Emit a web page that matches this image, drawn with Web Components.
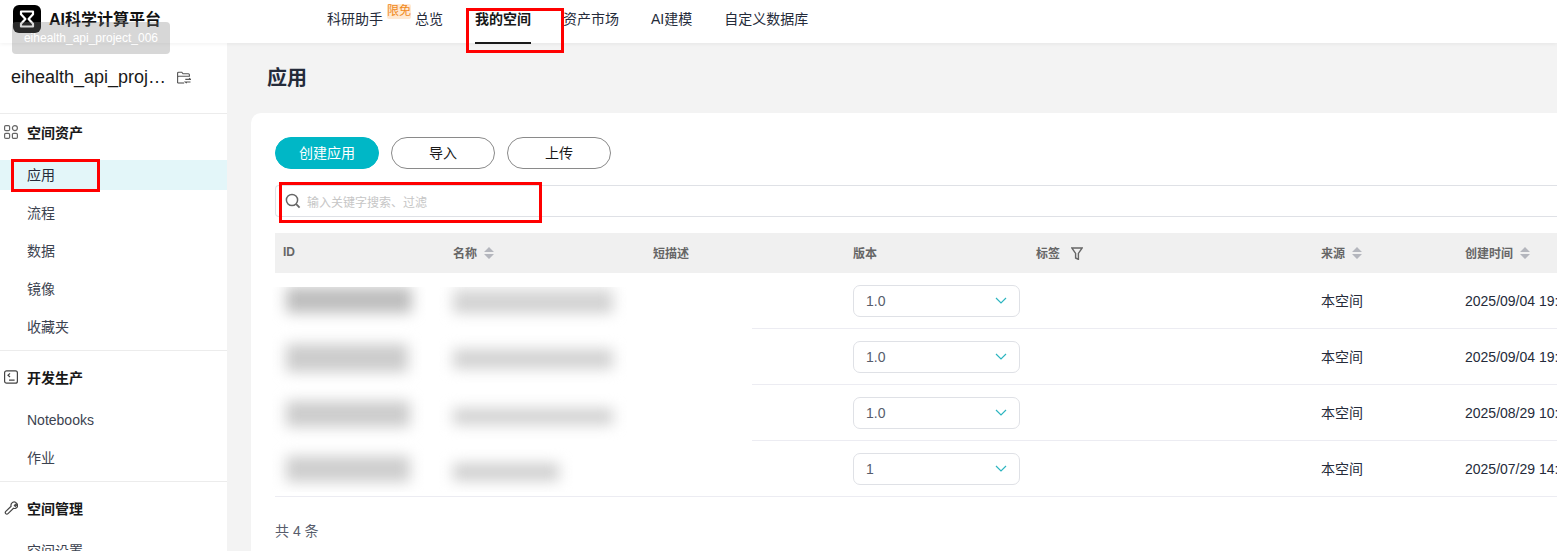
<!DOCTYPE html>
<html lang="zh">
<head>
<meta charset="utf-8">
<title>AI科学计算平台</title>
<style>
html, body { margin: 0; height: 551px; overflow: hidden; }
body { font: 14px "Liberation Sans", "Noto Sans CJK SC", sans-serif; color: #252b3a; background: #f3f3f3; }
</style>
</head>
<body>
<app-shell></app-shell>

<template id="top-bar-tpl">
  <style>
    :host { display: flex; height: 43px; background: #fff; box-shadow: 0 1px 4px rgba(0,0,0,.06); position: relative; z-index: 2; }
    .brand { display: flex; align-items: flex-start; gap: 8px; width: 327px; padding: 5px 0 0 13px; box-sizing: border-box; font-size: 16px; font-weight: 700; color: #111; }
    .brand span { line-height: 29px; }
    nav { display: flex; gap: 32px; }
    a { line-height: 39px; color: #252b3a; display: block; height: 44px; box-sizing: border-box; white-space: nowrap; }
    a.on { font-weight: 700; color: #191919; border-bottom: 2px solid #191919; }
    .with-badge { display: flex; gap: 4px; margin-right: -28px; }
    .badge { height: 15px; line-height: 15px; margin-top: 4px; font-size: 12px; color: #f08a1d; background: #ffe9d2; border-radius: 2px; }
    .tip { position: absolute; left: 12px; top: 22px; width: 158px; height: 32px; line-height: 32px; text-align: center; font-size: 12px; color: #fff; background: rgba(130,130,130,.32); border-radius: 4px; }
  </style>
  <div class="brand">
    <svg width="28" height="28" viewBox="0 0 28 28"><rect width="28" height="28" rx="6" fill="#000"/><path d="M8 6.5h12v2.7L15.6 14l4.4 4.8v2.7H8v-2.7l4.4-4.8L8 9.2z" fill="none" stroke="#fff" stroke-width="2.2" stroke-linejoin="round"/></svg>
    <span>AI科学计算平台</span>
  </div>
  <nav>
    <div class="with-badge"><a>科研助手</a><div class="badge">限免</div></div>
    <a>总览</a>
    <a class="on">我的空间</a>
    <a>资产市场</a>
    <a>AI建模</a>
    <a>自定义数据库</a>
  </nav>
  <div class="tip">eihealth_api_project_006</div>
</template>

<template id="side-section-tpl">
  <style>
    :host { display: block; border-top: 1px solid #ececec; padding-top: 13px; }
    :host([first]) { padding-top: 5px; }
    .head { display: flex; align-items: center; height: 28px; padding-bottom: 2px; box-sizing: border-box; margin-bottom: 13px; font-weight: 700; color: #191919; }
    .icon { width: 27px; padding-left: 4px; box-sizing: border-box; display: flex; }
  </style>
  <div class="head"><div class="icon"><slot name="icon"></slot></div><slot name="title"></slot></div>
  <slot></slot>
</template>

<template id="side-item-tpl">
  <style>
    :host { display: block; height: 30px; line-height: 30px; padding-left: 27px; margin-bottom: 8px; color: #3c4350; }
    :host([active]) { background: #e3f6f9; color: #252b3a; }
  </style>
  <slot></slot>
</template>

<template id="side-bar-tpl">
  <style>
    :host { display: block; width: 227px; flex: none; background: #fff; overflow: hidden; }
    .project { display: flex; align-items: center; height: 70px; padding: 0 0 2px 11px; box-sizing: border-box; font-size: 18px; color: #191919; gap: 11px; }
    .project svg { margin-top: 2px; }
  </style>
  <div class="project">
    <span>eihealth_api_proj…</span>
    <svg width="14" height="14" viewBox="0 0 14 14" fill="none" stroke="#555" stroke-width="1.1"><path d="M.6 12V2.2c0-.6.4-1 1-1h3.2l1.2 1.6h5.4c.6 0 1 .4 1 1v1.4H1.6c-.6 0-1 .4-1 1"/><path d="M.6 12h6.6"/><path d="M8.3 8.4h5.2l-1.4-1.2M13.5 11H8.3l1.4 1.2"/></svg>
  </div>
  <side-section first>
    <svg slot="icon" width="14" height="14" viewBox="0 0 14 14" fill="none" stroke="#666" stroke-width="1.2"><rect x=".6" y=".6" width="5" height="5" rx="1.2"/><rect x="8.4" y=".6" width="5" height="5" rx="2.5"/><rect x=".6" y="8.4" width="5" height="5" rx="1.2"/><rect x="8.4" y="8.4" width="5" height="5" rx="1.2"/></svg>
    <span slot="title">空间资产</span>
    <side-item active>应用</side-item>
    <side-item>流程</side-item>
    <side-item>数据</side-item>
    <side-item>镜像</side-item>
    <side-item>收藏夹</side-item>
  </side-section>
  <side-section>
    <svg slot="icon" width="14" height="14" viewBox="0 0 14 14" fill="none" stroke="#444" stroke-width="1.2"><rect x=".6" y=".8" width="12.8" height="12.4" rx="2"/><path d="M6 3.4 4 5.2 6 7M5 10.2h5.6"/></svg>
    <span slot="title">开发生产</span>
    <side-item>Notebooks</side-item>
    <side-item>作业</side-item>
  </side-section>
  <side-section>
    <svg slot="icon" width="14" height="14" viewBox="0 0 14 14" fill="none" stroke="#444" stroke-width="1.2"><path d="M8.8 1.2c1.4-.6 3 0 3.8 1.1L10.4 4.4l.9.9 2.1-1.9c.5 1.5 0 3-1.2 3.7-.9.5-1.9.5-2.7.2L4 12.6c-.7.7-1.7.6-2.3 0-.6-.7-.5-1.6.1-2.2l5.3-5.1c-.4-1.6.3-3.3 1.7-4.1z"/></svg>
    <span slot="title">空间管理</span>
    <side-item>空间设置</side-item>
  </side-section>
</template>

<template id="pill-button-tpl">
  <style>
    :host { display: block; width: 104px; height: 32px; box-sizing: border-box; line-height: 30px; text-align: center; border: 1px solid #8a8a8a; border-radius: 16px; color: #191919; background: #fff; }
    :host([primary]) { background: #00b7c6; border-color: #00b7c6; color: #fff; }
  </style>
  <slot></slot>
</template>

<template id="search-bar-tpl">
  <style>
    :host { display: flex; align-items: center; height: 32px; box-sizing: border-box; border: 1px solid #dfe1e6; border-right: 0; border-radius: 4px 0 0 4px; padding-left: 9px; gap: 6px; font-size: 12px; color: #c6c6c6; }
  </style>
  <svg width="16" height="16" viewBox="0 0 16 16" fill="none" stroke="#666" stroke-width="1.5"><circle cx="7" cy="7" r="5.6"/><path d="m11.2 11.2 3.4 3.4" stroke-width="1.8"/></svg>
  <span>输入关键字搜索、过滤</span>
</template>

<template id="sort-caret-tpl">
  <style>
    :host { display: inline-flex; margin-left: 7px; margin-top: 1px; }
  </style>
  <svg width="10" height="12" viewBox="0 0 10 12" fill="#b4b6bd"><path d="M5 0l5 5H0zM5 12 0 7h10z"/></svg>
</template>

<template id="version-select-tpl">
  <style>
    :host { display: flex; align-items: center; justify-content: space-between; width: 167px; height: 32px; box-sizing: border-box; padding: 0 12px; border: 1px solid #dfe1e6; border-radius: 7px; color: #575d6c; background: #fff; }
  </style>
  <slot></slot>
  <svg width="12" height="7" viewBox="0 0 12 7" fill="none" stroke="#2db5c0" stroke-width="1.2"><path d="m1 1 5 5 5-5"/></svg>
</template>

<template id="asset-table-tpl">
  <style>
    :host { display: block; position: relative; }
    .grid { display: grid; grid-template-columns: 170px 200px 200px 183px 285px 144px 300px; }
    .th { display: flex; align-items: center; height: 40px; padding: 0 0 2px 8px; box-sizing: border-box; background: #f0f0f0; font-size: 12px; font-weight: 700; color: #666; white-space: nowrap; }
    .td { display: flex; align-items: center; height: 55px; padding-left: 8px; border-bottom: 1px solid #ececf2; color: #252b3a; white-space: nowrap; overflow: hidden; }
    .td.cjk { padding-bottom: 2px; height: 53px; }
    .blur { position: absolute; left: -3px; top: 54px; width: 480px; height: 205px; background: #fff; overflow: hidden; }
    .smudges { display: grid; grid-template-columns: repeat(2, auto); justify-content: start; filter: blur(7px); }
    .cell { height: 56px; box-sizing: border-box; }
    .cell.id { width: 138px; padding-left: 14px; }
    .cell.name { width: 300px; padding-left: 43px; }
  </style>
  <div class="grid" id="grid"></div>
  <div class="blur">
    <div class="smudges" id="smudges"></div>
  </div>
</template>

<template id="main-panel-tpl">
  <style>
    :host { display: block; flex: 1; min-width: 0; overflow: hidden; padding-left: 24px; }
    h1 { margin: 0; height: 70px; line-height: 70px; margin-left: 16px; font-size: 20px; font-weight: 700; color: #252b3a; }
    .card { width: 1400px; padding: 24px; background: #fff; border-radius: 10px 0 0 0; height: 420px; }
    .actions { display: flex; gap: 12px; margin-bottom: 16px; }
    search-bar { margin-bottom: 16px; }
    .total { margin-top: 23px; color: #575d6c; }
  </style>
  <h1>应用</h1>
  <div class="card">
    <div class="actions">
      <pill-button primary>创建应用</pill-button>
      <pill-button>导入</pill-button>
      <pill-button>上传</pill-button>
    </div>
    <search-bar></search-bar>
    <asset-table></asset-table>
    <div class="total">共 4 条</div>
  </div>
</template>

<template id="app-shell-tpl">
  <style>
    :host { display: block; position: relative; height: 551px; overflow: hidden; }
    .body { display: flex; height: 508px; }
    .mark { position: absolute; box-sizing: border-box; border: 3px solid #f00; z-index: 5; }
  </style>
  <top-bar></top-bar>
  <div class="body">
    <side-bar></side-bar>
    <main-panel></main-panel>
  </div>
  <div class="mark" style="left:466px;top:8px;width:98px;height:45px"></div>
  <div class="mark" style="left:11px;top:159px;width:89px;height:33px"></div>
  <div class="mark" style="left:279px;top:182px;width:263px;height:41px"></div>
</template>

<script>
function define(name, tplId, setup) {
  customElements.define(name, class extends HTMLElement {
    constructor() {
      super();
      this.attachShadow({ mode: "open" });
      this.shadowRoot.appendChild(document.getElementById(tplId).content.cloneNode(true));
      if (setup) setup(this.shadowRoot);
    }
  });
}

const ROWS = [
  ["1.0", "2025/09/04 19:12:08"],
  ["1.0", "2025/09/04 19:05:41"],
  ["1.0", "2025/08/29 10:26:33"],
  ["1", "2025/07/29 14:18:50"]
];

// [width, top margin, height, background] of the blurred id and name bars in each row
const SMUDGES = [
  [[126, 0, 26, "#bebebe"], [160, 0, 26, "linear-gradient(#e0e0e0 40%, #d0d0d0 40%)"]],
  [[122, 1, 28, "#cccccc"], [160, 6, 20, "#d2d2d2"]],
  [[124, 2, 26, "#cccccc"], [160, 9, 17, "#d2d2d2"]],
  [[124, 1, 26, "#cecece"], [106, 8, 18, "#d0d0d0"]]
];

function fillTable(root) {
  const heads = [["ID"], ["名称", "sort"], ["短描述"], ["版本"], ["标签", "filter"], ["来源", "sort"], ["创建时间", "sort"]];
  root.getElementById("grid").innerHTML = heads.map(([label, extra]) => {
    let tail = "";
    if (extra === "sort") tail = "<sort-caret></sort-caret>";
    if (extra === "filter") tail = '<svg style="margin:2px 0 0 11px" width="12" height="13" viewBox="0 0 12 13" fill="none" stroke="#666" stroke-width="1.4"><path d="M.8 1h10.4L7.4 6.4v6L4.6 11V6.4z"/></svg>';
    return `<div class="th">${label}${tail}</div>`;
  }).join("") + ROWS.map(([version, time]) => `
    <div class="td"></div><div class="td"></div><div class="td"></div>
    <div class="td"><version-select>${version}</version-select></div>
    <div class="td"></div>
    <div class="td cjk">本空间</div>
    <div class="td">${time}</div>`).join("");

  root.getElementById("smudges").innerHTML = SMUDGES.map(pair => pair.map(([w, mt, h, bg], i) =>
    `<div class="cell ${i ? "name" : "id"}"><div style="width:${w}px;height:${h}px;margin-top:${mt}px;background:${bg}"></div></div>`
  ).join("")).join("");
}

define("top-bar", "top-bar-tpl");
define("side-section", "side-section-tpl");
define("side-item", "side-item-tpl");
define("side-bar", "side-bar-tpl");
define("pill-button", "pill-button-tpl");
define("search-bar", "search-bar-tpl");
define("sort-caret", "sort-caret-tpl");
define("version-select", "version-select-tpl");
define("asset-table", "asset-table-tpl", fillTable);
define("main-panel", "main-panel-tpl");
define("app-shell", "app-shell-tpl");
</script>
</body>
</html>
